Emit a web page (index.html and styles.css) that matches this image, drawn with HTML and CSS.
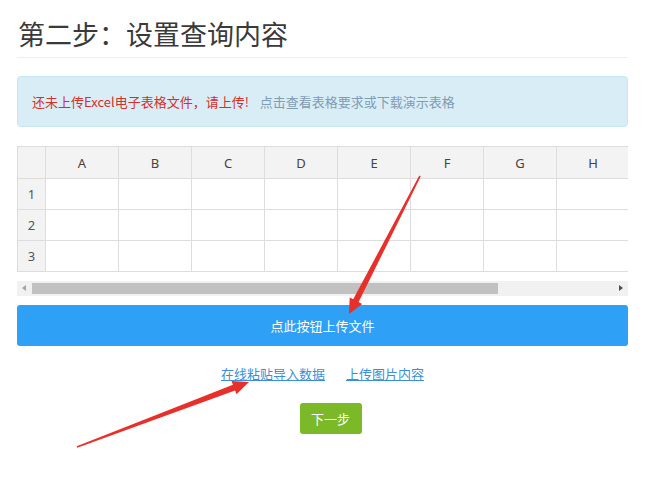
FILE: index.html
```html
<!DOCTYPE html>
<html>
<head>
  <meta charset="utf-8">
  <title>设置查询内容</title>
  <link rel="stylesheet" href="styles.css">
</head>
<body>
  <div class="page">
    <h2 class="step-title">第二步：设置查询内容</h2>

    <div class="alert">
      <span class="alert-warn">还未上传Excel电子表格文件，请上传!</span>
      <a class="alert-link" href="#">点击查看表格要求或下载演示表格</a>
    </div>

    <div class="sheet">
      <table class="grid">
        <colgroup>
          <col class="col-head">
          <col><col><col><col><col><col><col><col>
        </colgroup>
        <thead>
          <tr>
            <th></th><th>A</th><th>B</th><th>C</th><th>D</th><th>E</th><th>F</th><th>G</th><th>H</th>
          </tr>
        </thead>
        <tbody>
          <tr><th>1</th><td></td><td></td><td></td><td></td><td></td><td></td><td></td><td></td></tr>
          <tr><th>2</th><td></td><td></td><td></td><td></td><td></td><td></td><td></td><td></td></tr>
          <tr><th>3</th><td></td><td></td><td></td><td></td><td></td><td></td><td></td><td></td></tr>
        </tbody>
      </table>
    </div>

    <div class="scrollbar">
      <span class="scroll-arrow left"></span>
      <div class="scroll-track"><div class="scroll-thumb"></div></div>
      <span class="scroll-arrow right"></span>
    </div>

    <button class="upload-btn">点此按钮上传文件</button>

    <div class="links">
      <a href="#">在线粘贴导入数据</a>
      <a href="#">上传图片内容</a>
    </div>

    <div class="next-row">
      <button class="next-btn">下一步</button>
    </div>
  </div>

  <svg class="arrows" width="660" height="477" viewBox="0 0 660 477">
    <polygon points="420.7,176.4 358.6,302.1 362.1,303.9 349,314 349.7,297.5 353.2,299.3 419.3,175.6" />
    <polygon points="77.3,447.7 235.1,390.5 236.5,394.2 249,382 231.5,381.1 232.9,384.8 76.7,446.3" />
  </svg>
</body>
</html>
```

FILE: styles.css
```css
body {
  margin: 0;
  font-family: "Noto Sans", "Noto Sans CJK SC", sans-serif;
  color: #333;
  background: #fff;
}
.page {
  width: 611px;
  padding: 0 32px 0 17px;
}
.step-title {
  margin: 18px 0 0;
  padding: 0 0 7px 1px;
  font-size: 27px;
  font-weight: normal;
  line-height: 32px;
  color: #3a3a3a;
  border-bottom: 1px solid #eee;
  font-family: "Noto Sans CJK SC", sans-serif;
}
.alert {
  margin-top: 18px;
  height: 49px;
  padding: 0 14px;
  display: flex;
  align-items: center;
  gap: 11px;
  font-size: 13px;
  font-family: "Noto Sans CJK SC", sans-serif;
  background: #d9edf7;
  border: 1px solid #c8e5f2;
  border-radius: 4px;
}
.alert-warn {
  color: #d4302b;
}
.alert-link {
  color: #7f9cb3;
  text-decoration: none;
}
.sheet {
  margin-top: 19px;
  width: 611px;
  overflow: hidden;
}
.grid {
  border-collapse: collapse;
  table-layout: fixed;
  width: 613px;
  font-size: 13px;
}
.grid col {
  width: 73px;
}
.grid col.col-head {
  width: 28px;
}
.grid th,
.grid td {
  border: 1px solid #ddd;
  height: 30px;
  padding: 0;
  text-align: center;
  font-weight: normal;
}
.grid thead th {
  height: 31px;
  background: #f3f3f3;
  color: #444;
}
.grid tbody th {
  background: #f3f3f3;
  color: #555;
}
.scrollbar {
  margin-top: 9px;
  height: 15px;
  display: flex;
  align-items: center;
  background: #f1f1f1;
}
.scroll-arrow {
  width: 15px;
  height: 15px;
  position: relative;
}
.scroll-arrow::after {
  content: "";
  position: absolute;
  top: 4px;
  border-top: 3.5px solid transparent;
  border-bottom: 3.5px solid transparent;
}
.scroll-arrow.left::after {
  left: 5px;
  border-right: 4px solid #a3a3a3;
}
.scroll-arrow.right::after {
  left: 6px;
  border-left: 4px solid #505050;
}
.scroll-track {
  flex: 1;
  height: 11px;
}
.scroll-thumb {
  width: 466px;
  height: 11px;
  background: #c1c1c1;
}
.upload-btn {
  display: block;
  width: 611px;
  height: 41px;
  margin-top: 9px;
  border: none;
  border-radius: 3px;
  background: #2ea0f5;
  color: #fff;
  font-size: 13px;
  font-family: "Noto Sans CJK SC", sans-serif;
}
.links {
  margin-top: 19px;
  display: flex;
  justify-content: center;
  gap: 21px;
  font-size: 13px;
  line-height: 18px;
  font-family: "Noto Sans CJK SC", sans-serif;
}
.links a {
  color: #3c8fd6;
  text-decoration: underline;
}
.next-row {
  margin-top: 20px;
  display: flex;
  justify-content: center;
  padding-left: 16px;
}
.next-btn {
  width: 62px;
  height: 31px;
  border: none;
  border-radius: 3px;
  background: #7bb929;
  color: #fff;
  font-size: 13px;
  font-family: "Noto Sans CJK SC", sans-serif;
}
.arrows {
  position: absolute;
  left: 0;
  top: 0;
  pointer-events: none;
}
.arrows polygon {
  fill: #e8302a;
}
```
